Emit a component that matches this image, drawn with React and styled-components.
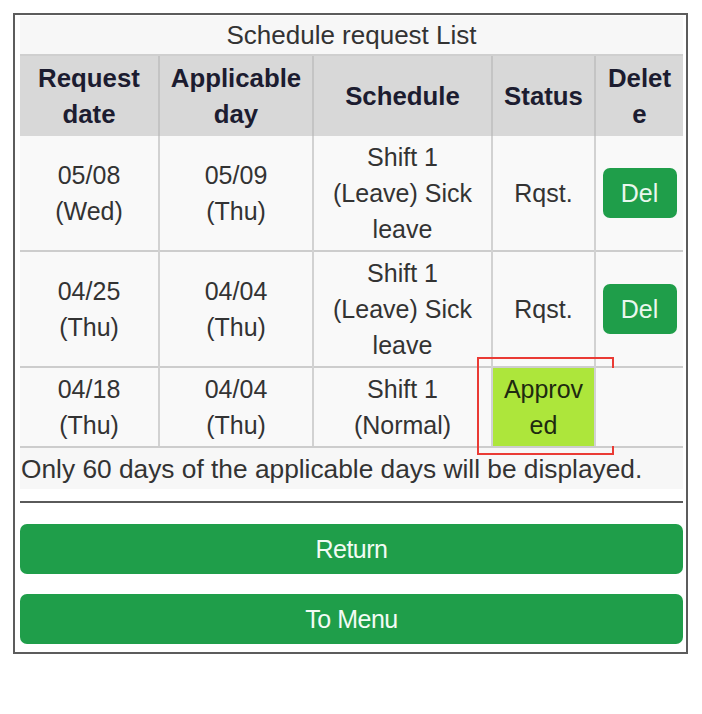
import React from "react";
import styled, { createGlobalStyle } from "styled-components";

const Global = createGlobalStyle`
  html, body { margin: 0; padding: 0; background: #ffffff; }
  body { font-family: "Liberation Sans", Arial, sans-serif; }
`;

const Frame = styled.div`
  box-sizing: border-box;
  width: 675px;
  margin: 13px 0 0 13px;
  border: 2px solid #5c5c5c;
  padding: 1px 3px 8px 5px;
  background: #ffffff;
  display: flex;
  flex-direction: column;
`;

const Title = styled.div`
  height: 38px;
  line-height: 38px;
  text-align: center;
  font-size: 26px;
  color: #333;
  background: #f7f7f7;
  border-bottom: 2px solid #cfcfcf;
`;

const Table = styled.table`
  width: 100%;
  border-collapse: collapse;
  table-layout: fixed;
  font-size: 25px;
  line-height: 36px;
`;

const HeadCell = styled.th`
  background: #d8d8d8;
  color: #1c1c30;
  font-weight: bold;
  font-size: 25.8px;
  padding: 4px ${(p) => (p.$tight ? "5px" : "2px")} 4px;
  text-align: center;
  vertical-align: middle;
  word-break: ${(p) => (p.$tight ? "break-all" : "normal")};
  & + & { border-left: 2px solid #c4c4c4; }
`;

const Row = styled.tr`
  & + & > td { border-top: 2px solid #cdcdcd; }
`;

const Cell = styled.td`
  position: relative;
  background: ${(p) => (p.$approved ? "#ade63b" : "#f9f9f9")};
  color: ${(p) => (p.$approved ? "#1e2a10" : "#333")};
  padding: 3px ${(p) => p.$pad ?? 12}px;
  text-align: center;
  vertical-align: middle;
  word-break: ${(p) => (p.$approved ? "break-all" : "normal")};
  & + & { border-left: 2px solid #d2d2d2; }
`;

const Line = styled.span`
  display: block;
`;

const DelButton = styled.button`
  display: block;
  margin: 0 auto;
  width: 74px;
  height: 50px;
  border: none;
  border-radius: 7px;
  background: #1f9e4a;
  color: #eaf7ee;
  font-family: "Liberation Sans", Arial, sans-serif;
  font-size: 25px;
  padding: 0;
`;

const Highlight = styled.span`
  position: absolute;
  top: -11px;
  bottom: -9px;
  left: -16px;
  right: -20px;
  border: 2px solid #ea3b35;
  pointer-events: none;
`;

const Note = styled.div`
  background: #f7f7f7;
  border-top: 2px solid #cdcdcd;
  font-size: 26.3px;
  line-height: 36px;
  padding: 3px 0 2px 1px;
  color: #333;
  white-space: nowrap;
`;

const Rule = styled.hr`
  border: none;
  height: 2px;
  background: #5a5a5a;
  margin: 12px 0 21px;
`;

const Actions = styled.div`
  display: flex;
  flex-direction: column;
  gap: 20px;
`;

const WideButton = styled.button`
  height: 50px;
  border: none;
  border-radius: 7px;
  background: #1f9e4a;
  color: #f2fbf4;
  font-family: "Liberation Sans", Arial, sans-serif;
  font-size: 25px;
  letter-spacing: -0.5px;
  width: 100%;
`;

const rows = [
  { req: ["05/08", "(Wed)"], day: ["05/09", "(Thu)"], shift: "Shift 1", detail: "(Leave) Sick leave", status: "Rqst.", del: true },
  { req: ["04/25", "(Thu)"], day: ["04/04", "(Thu)"], shift: "Shift 1", detail: "(Leave) Sick leave", status: "Rqst.", del: true },
  { req: ["04/18", "(Thu)"], day: ["04/04", "(Thu)"], shift: "Shift 1", detail: "(Normal)", status: "Approved", del: false, approved: true },
];

export default function App() {
  return (
    <>
      <Global />
      <Frame>
        <Title>Schedule request List</Title>
        <Table>
          <colgroup>
            <col style={{ width: 139 }} />
            <col style={{ width: 154 }} />
            <col style={{ width: 179 }} />
            <col style={{ width: 103 }} />
            <col style={{ width: 88 }} />
          </colgroup>
          <thead>
            <tr>
              <HeadCell>Request date</HeadCell>
              <HeadCell>Applicable day</HeadCell>
              <HeadCell>Schedule</HeadCell>
              <HeadCell>Status</HeadCell>
              <HeadCell $tight>Delete</HeadCell>
            </tr>
          </thead>
          <tbody>
            {rows.map((r, i) => (
              <Row key={i}>
                <Cell>
                  <Line>{r.req[0]}</Line>
                  <Line>{r.req[1]}</Line>
                </Cell>
                <Cell>
                  <Line>{r.day[0]}</Line>
                  <Line>{r.day[1]}</Line>
                </Cell>
                <Cell>
                  <Line>{r.shift}</Line>
                  <Line>{r.detail}</Line>
                </Cell>
                <Cell $approved={r.approved} $pad={8}>
                  {r.status}
                  {r.approved && <Highlight />}
                </Cell>
                <Cell $pad={0}>{r.del && <DelButton>Del</DelButton>}</Cell>
              </Row>
            ))}
          </tbody>
        </Table>
        <Note>Only 60 days of the applicable days will be displayed.</Note>
        <Rule />
        <Actions>
          <WideButton>Return</WideButton>
          <WideButton>To Menu</WideButton>
        </Actions>
      </Frame>
    </>
  );
}
